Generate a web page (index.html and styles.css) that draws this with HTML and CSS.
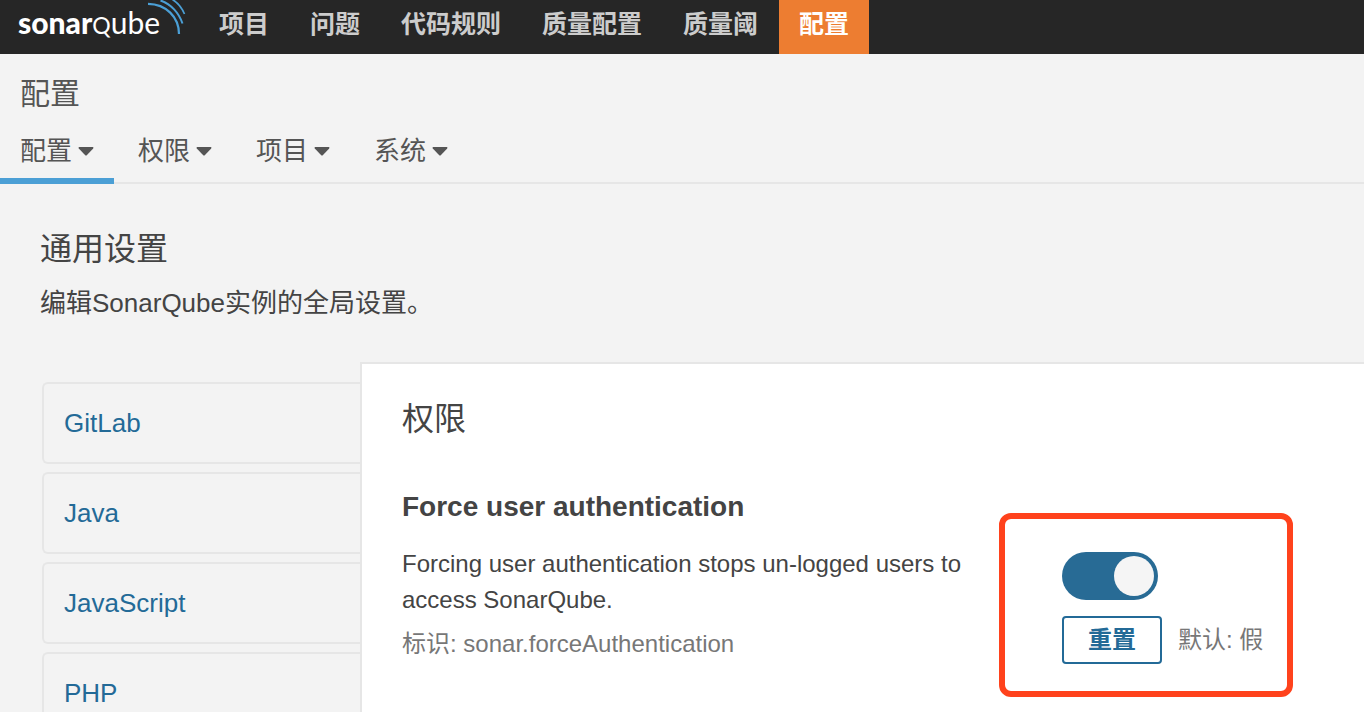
FILE: index.html
```html
<!DOCTYPE html>
<html lang="zh-CN">
<head>
<meta charset="utf-8">
<meta name="viewport" content="width=device-width, initial-scale=1">
<title>SonarQube - 通用设置</title>
<link rel="stylesheet" href="styles.css">
</head>
<body>
<header class="navbar">
  <a class="brand" href="#" aria-label="sonarqube">
    <span class="brand-text"><b>sonar</b><span class="brand-q">Q</span>ube</span>
    <svg class="brand-waves" width="40" height="36" viewBox="0 0 40 36" fill="none" stroke="#4b9fd5" aria-hidden="true">
      <path d="M0 3.800C18 4 31 17 31 34" stroke-width="2.200"/>
      <path d="M12.500 .5C23 4 31 13 34.500 23.500" stroke-width="2"/>
      <path d="M24.500 -.5C30 3 34 8 36.500 14" stroke-width="1.700"/>
    </svg>
  </a>
  <nav class="main-nav">
    <a href="#">项目</a>
    <a href="#">问题</a>
    <a href="#">代码规则</a>
    <a href="#">质量配置</a>
    <a href="#">质量阈</a>
    <a class="active" href="#">配置</a>
  </nav>
</header>

<div class="context">
  <h1 class="context-title">配置</h1>
  <nav class="tabs">
    <button type="button" class="tab active">配置<svg class="caret" viewBox="0 0 16 9" aria-hidden="true"><path d="M1.200 0H14.800Q16 .3 15.200 1.500L9 8Q8 9 7 8L.8 1.500Q0 .3 1.200 0Z"/></svg></button>
    <button type="button" class="tab">权限<svg class="caret" viewBox="0 0 16 9" aria-hidden="true"><path d="M1.200 0H14.800Q16 .3 15.200 1.500L9 8Q8 9 7 8L.8 1.500Q0 .3 1.200 0Z"/></svg></button>
    <button type="button" class="tab">项目<svg class="caret" viewBox="0 0 16 9" aria-hidden="true"><path d="M1.200 0H14.800Q16 .3 15.200 1.500L9 8Q8 9 7 8L.8 1.500Q0 .3 1.200 0Z"/></svg></button>
    <button type="button" class="tab">系统<svg class="caret" viewBox="0 0 16 9" aria-hidden="true"><path d="M1.200 0H14.800Q16 .3 15.200 1.500L9 8Q8 9 7 8L.8 1.500Q0 .3 1.200 0Z"/></svg></button>
  </nav>
</div>

<main class="page">
  <header class="page-header">
    <h2 class="page-title">通用设置</h2>
    <p class="page-description">编辑SonarQube实例的全局设置。</p>
  </header>
  <div class="layout">
    <nav class="side">
      <a href="#">GitLab</a>
      <a href="#">Java</a>
      <a href="#">JavaScript</a>
      <a href="#">PHP</a>
    </nav>
    <section class="panel">
      <h3 class="category">权限</h3>
      <div class="setting">
        <div class="definition">
          <h4 class="setting-name" id="force-name">Force user authentication</h4>
          <p class="setting-text">Forcing user authentication stops un-logged users to access SonarQube.</p>
          <p class="setting-key">标识: sonar.forceAuthentication</p>
        </div>
        <div class="control">
          <input class="switch" type="checkbox" role="switch" aria-labelledby="force-name" checked>
          <div class="control-row">
            <button type="button" class="reset">重置</button>
            <span class="default">默认: 假</span>
          </div>
        </div>
      </div>
    </section>
  </div>
</main>
</body>
</html>
```

FILE: styles.css
```css
* {
  box-sizing: border-box;
}

html {
  height: 100%;
}

body {
  display: flex;
  flex-direction: column;
  min-height: 100%;
  margin: 0;
  background: #f3f3f3;
  color: #444;
  font: 26px/36px "Liberation Sans", "Noto Sans CJK SC", sans-serif;
}

h1, h2, h3, h4, p {
  margin: 0;
  font-weight: 400;
}

a {
  color: #236a97;
  text-decoration: none;
}

/* Top bar */
.navbar {
  display: flex;
  height: 54px;
  background: #262626;
}

.brand {
  display: flex;
  width: 199px;
  padding-left: 18px;
  color: #fff;
}

.brand-text {
  width: 130px;
  font: 30px/44px Lato, sans-serif;
  white-space: nowrap;
}

.brand-text b {
  font-weight: 900;
}

.brand-q {
  font-size: 23px;
}

.brand-waves {
  flex: none;
}

.main-nav {
  display: flex;
  gap: 1px;
}

.main-nav a {
  padding: 0 20px;
  color: #ccc;
  font-size: 25px;
  font-weight: 700;
  line-height: 48px;
  white-space: nowrap;
}

.main-nav .active {
  background: #ed7d31;
  color: #fff;
}

/* Section title and tabs */
.context {
  padding-top: 20px;
  border-bottom: 2px solid #e6e6e6;
  color: #555;
}

.context-title {
  padding: 0 20px;
  font-size: 30px;
  line-height: 40px;
}

.tabs {
  display: flex;
  gap: 4px;
  margin: 15px 0 -2px;
}

.tab {
  display: flex;
  align-items: center;
  gap: 6px;
  padding: 4px 20px 9px;
  border: 0;
  border-bottom: 6px solid transparent;
  background: none;
  color: inherit;
  font: inherit;
}

.tab.active {
  border-bottom-color: #4b9fd5;
}

.caret {
  width: 16px;
  height: 9px;
  fill: #555;
}

/* Page */
.page {
  display: flex;
  flex: 1;
  flex-direction: column;
  padding: 45px 0 0 40px;
}

.page-title,
.category {
  font-size: 32px;
  line-height: 40px;
}

.page-description {
  margin-top: 16px;
}

.layout {
  display: flex;
  flex: 1;
  margin-top: 41px;
}

.side {
  display: flex;
  flex: none;
  flex-direction: column;
  gap: 8px;
  width: 320px;
  padding: 20px 0 0 2px;
}

.side a {
  padding: 21px 20px;
  border: 2px solid #e6e6e6;
  border-right: 0;
  border-radius: 6px 0 0 6px;
}

.panel {
  flex: 1;
  padding: 35px 40px;
  border: solid #e6e6e6;
  border-width: 2px 0 0 2px;
  background: #fff;
}

.setting {
  display: grid;
  grid-template-columns: minmax(0, 600px) auto;
  justify-content: start;
  gap: 60px;
  margin-top: 50px;
  font-size: 24px;
}

.setting-name {
  font-size: 28px;
  font-weight: 700;
}

.setting-text {
  margin-top: 21px;
}

.setting-key {
  margin-top: 8px;
}

.setting-key,
.default {
  color: #777;
}

.control {
  position: relative;
  padding-top: 63px;
}

/* Highlight frame around the control */
.control::after {
  content: "";
  position: absolute;
  inset: 24px -30px -33px -63px;
  border: 6px solid #ff421c;
  border-radius: 12px;
  pointer-events: none;
}

.switch {
  display: flex;
  appearance: none;
  width: 96px;
  height: 48px;
  margin: 0;
  padding: 4px;
  border-radius: 24px;
  background: #ccc;
}

.switch::before {
  content: "";
  width: 40px;
  height: 40px;
  border-radius: 50%;
  background: #f5f5f5;
}

.switch:checked {
  justify-content: flex-end;
  background: #286b95;
}

.control-row {
  display: flex;
  align-items: center;
  gap: 16px;
  margin-top: 16px;
  white-space: nowrap;
}

.reset {
  width: 100px;
  height: 48px;
  padding: 0;
  border: 2px solid #236a97;
  border-radius: 4px;
  background: #fff;
  color: #236a97;
  font: inherit;
  font-weight: 700;
}
```
